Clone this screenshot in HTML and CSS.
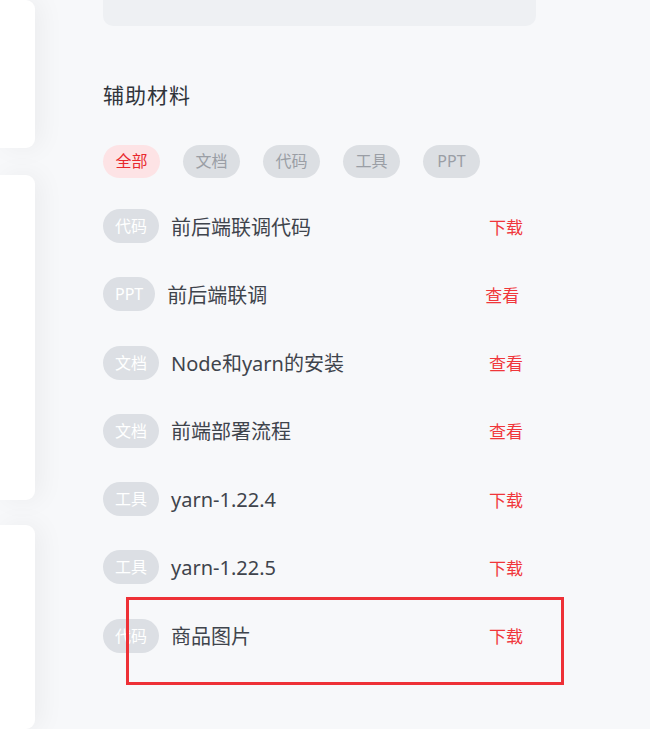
FILE: index.html
```html
<!DOCTYPE html>
<html lang="zh-CN">
<head>
    <meta charset="UTF-8">
    <meta name="viewport" content="width=device-width, initial-scale=1.0">
    <title>辅助材料</title>
    <link rel="stylesheet" href="styles.css">
</head>
<body>
    <div class="page">
        <div class="side">
            <div class="side-card card-a"></div>
            <div class="side-card card-b"></div>
            <div class="side-card card-c"></div>
        </div>

        <div class="main">
            <div class="top-box"></div>

            <h3 class="section-title">辅助材料</h3>

            <div class="filters">
                <span class="chip active">全部</span>
                <span class="chip">文档</span>
                <span class="chip">代码</span>
                <span class="chip">工具</span>
                <span class="chip">PPT</span>
            </div>

            <ul class="material-list">
                <li class="material">
                    <span class="tag">代码</span>
                    <span class="name">前后端联调代码</span>
                    <a class="action" href="#">下载</a>
                </li>
                <li class="material">
                    <span class="tag">PPT</span>
                    <span class="name">前后端联调</span>
                    <a class="action" href="#">查看</a>
                </li>
                <li class="material">
                    <span class="tag">文档</span>
                    <span class="name">Node和yarn的安装</span>
                    <a class="action" href="#">查看</a>
                </li>
                <li class="material">
                    <span class="tag">文档</span>
                    <span class="name">前端部署流程</span>
                    <a class="action" href="#">查看</a>
                </li>
                <li class="material">
                    <span class="tag">工具</span>
                    <span class="name">yarn-1.22.4</span>
                    <a class="action" href="#">下载</a>
                </li>
                <li class="material">
                    <span class="tag">工具</span>
                    <span class="name">yarn-1.22.5</span>
                    <a class="action" href="#">下载</a>
                </li>
                <li class="material">
                    <span class="tag">代码</span>
                    <span class="name">商品图片</span>
                    <a class="action" href="#">下载</a>
                </li>
            </ul>
        </div>
    </div>

    <!-- 标注框 -->
    <div class="highlight"></div>
</body>
</html>
```

FILE: styles.css
```css
html, body { height: 100%; }
body {
    margin: 0;
    background-color: #f7f8fa;
    font-family: "Noto Sans", "Noto Sans CJK SC", sans-serif;
    color: #3b4048;
    overflow: hidden;
    position: relative;
}
.page { display: flex; height: 100%; }

/* 左侧卡片 */
.side {
    width: 35px;
    flex: none;
    display: flex;
    flex-direction: column;
}
.side-card {
    background: #fff;
    border-radius: 0 9px 9px 0;
    box-shadow: 6px 0 26px rgba(0,0,0,0.05);
}
.card-a { height: 148px; }
.card-b { height: 325px; margin-top: 27px; }
.card-c { flex: 1; margin-top: 25px; }

/* 主区域 */
.main { margin-left: 68px; width: 433px; }
.top-box {
    height: 26px;
    background: #eef0f3;
    border-radius: 0 0 10px 10px;
}
.section-title {
    margin: 54px 0 0;
    font-size: 21px;
    font-weight: normal;
    line-height: 30px;
    color: #30343a;
    letter-spacing: 1px;
}

.filters {
    display: flex;
    gap: 23px;
    margin-top: 35px;
}
.chip {
    width: 57px;
    height: 33px;
    line-height: 33px;
    text-align: center;
    border-radius: 17px;
    font-size: 16px;
    background: #dcdfe3;
    color: #9a9ea5;
}
.chip.active { background: #fde3e5; color: #e8282e; }

.material-list {
    list-style: none;
    margin: 31px 0 0;
    padding: 0;
    display: flex;
    flex-direction: column;
    gap: 34.3px;
}
.material { display: flex; align-items: center; height: 34px; }
.tag {
    height: 34px;
    line-height: 34px;
    padding: 0 12px;
    border-radius: 17px;
    background: #dcdfe4;
    color: #fff;
    font-size: 16px;
}
.name {
    width: 318px;
    margin-left: 12px;
    font-size: 20px;
    color: #3f444c;
}
.action {
    font-size: 17px;
    color: #f0363a;
    text-decoration: none;
}

.highlight {
    position: absolute;
    left: 126px;
    top: 597px;
    width: 432px;
    height: 82px;
    border: 3px solid #ee3036;
}
```
